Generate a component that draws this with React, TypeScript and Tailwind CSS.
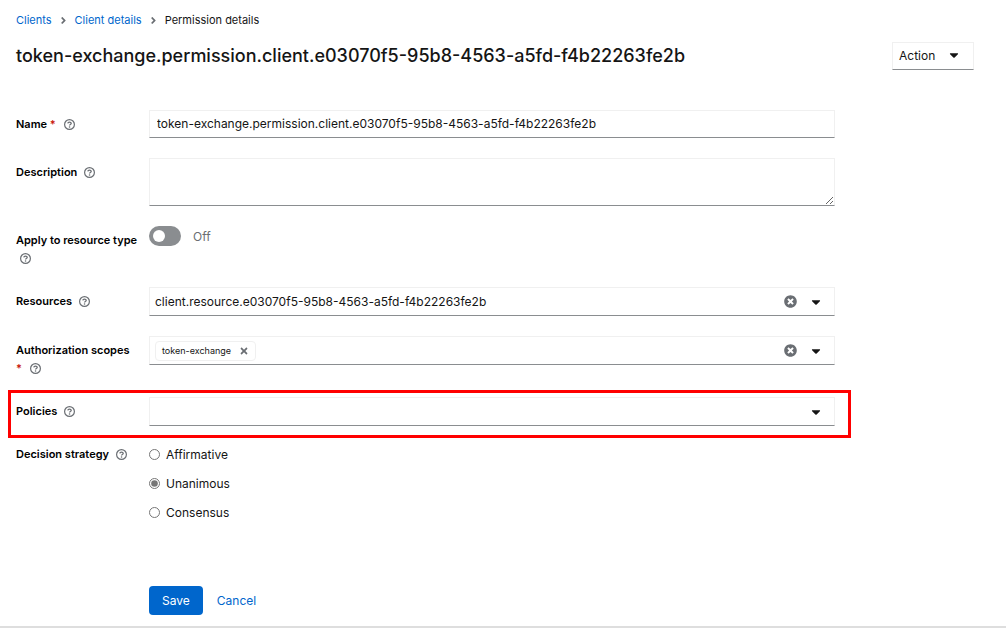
import { useState, type ReactNode } from "react";
import { FaAngleRight, FaCaretDown, FaTimes, FaTimesCircle } from "react-icons/fa";
import clsx from "clsx";

const PERMISSION_NAME =
  "token-exchange.permission.client.e03070f5-95b8-4563-a5fd-f4b22263fe2b";
const STRATEGIES = ["Affirmative", "Unanimous", "Consensus"];

const FIELD_BORDER = "border border-[#f0f0f0] border-b-[#8a8d90] bg-white";

function HelpButton({ label }: { label: string }) {
  return (
    <button
      type="button"
      aria-label={`Help for ${label}`}
      className="ml-1 inline-block align-[-2px] leading-none text-[#6a6e73]"
    >
      <svg viewBox="0 0 22 22" className="size-[11px]" fill="none" stroke="currentColor">
        <circle cx="11" cy="11" r="9.800" strokeWidth="2.400" />
        <path
          d="M7.600 8.800C7.800 7 9.200 6.200 11 6.200c2 0 3.400 1 3.400 2.600 0 2.200-3.300 2-3.300 4"
          strokeWidth="2.600"
        />
        <circle cx="11.100" cy="15.900" r="1.600" fill="currentColor" stroke="none" />
      </svg>
    </button>
  );
}

function Field({
  id,
  label,
  required,
  highlighted,
  flush,
  children,
}: {
  id: string;
  label: string;
  required?: boolean;
  highlighted?: boolean;
  flush?: boolean;
  children: ReactNode;
}) {
  return (
    <div
      className={clsx("relative grid grid-cols-[133px_minmax(0,1fr)]", flush && "-mt-px")}
    >
      <div
        className={clsx(
          "pr-2.5 text-[11px] leading-[18px] font-semibold text-black",
          !flush && "pt-[5px]"
        )}
      >
        <label htmlFor={id} id={`${id}-label`}>
          {label}
        </label>{" "}
        <span className="whitespace-nowrap">
          {required && <span className="mr-1 text-[#c9190b]">*</span>}
          <HelpButton label={label} />
        </span>
      </div>
      <div className="min-w-0">{children}</div>
      {highlighted && (
        <div className="pointer-events-none absolute -top-[7px] -right-4 -bottom-3 -left-2 border-3 border-[#ff0000]" />
      )}
    </div>
  );
}

function Typeahead({
  id,
  value,
  chip,
  clearable,
}: {
  id: string;
  value?: string;
  chip?: string;
  clearable?: boolean;
}) {
  const [text, setText] = useState(value ?? "");

  return (
    <div className={clsx("flex h-[29px] items-center pr-[11px] pl-[5px]", FIELD_BORDER)}>
      {chip && (
        <span className="mr-2 flex h-5 items-center gap-2 rounded-sm border border-[#f0f0f0] px-1.5 text-[9px]">
          {chip}
          <button type="button" aria-label={`Remove ${chip}`} className="text-[#6a6e73]">
            <FaTimes className="size-[10px]" />
          </button>
        </span>
      )}
      <input
        id={id}
        type="text"
        value={text}
        onChange={(e) => setText(e.target.value)}
        className="min-w-0 flex-1 outline-none"
      />
      {clearable && (
        <button
          type="button"
          aria-label="Clear"
          className="mr-3 text-[#6a6e73]"
          onClick={() => setText("")}
        >
          <FaTimesCircle className="size-[13px]" />
        </button>
      )}
      <button type="button" aria-label="Toggle options">
        <FaCaretDown className="size-3.5" />
      </button>
    </div>
  );
}

function Breadcrumb() {
  return (
    <nav aria-label="Breadcrumb">
      <ol className="flex items-center gap-1.5 text-[11px] leading-4">
        <li>
          <a href="#clients" className="text-[#0066cc]">
            Clients
          </a>
        </li>
        <FaAngleRight className="size-[11px] text-[#6a6e73]" />
        <li>
          <a href="#client" className="text-[#0066cc]">
            Client details
          </a>
        </li>
        <FaAngleRight className="size-[11px] text-[#6a6e73]" />
        <li aria-current="page">Permission details</li>
      </ol>
    </nav>
  );
}

export default function App() {
  const [applyToType, setApplyToType] = useState(false);
  const [strategy, setStrategy] = useState("Unanimous");

  return (
    <main className="border-b-2 border-[#dedede] bg-white pt-3 pr-8 pb-[11px] pl-4 font-[Inter,sans-serif] text-[12px] leading-[19px] text-[#151515]">
      <Breadcrumb />

      <header className="mt-3.5 flex items-start justify-between gap-4">
        <h1 className="text-[18px] leading-7 font-medium">{PERMISSION_NAME}</h1>
        <button
          type="button"
          className={clsx("flex h-7 w-[82px] items-center gap-3 px-1.5 pb-0.5", FIELD_BORDER)}
        >
          Action
          <FaCaretDown className="size-3.5" />
        </button>
      </header>

      <form
        className="mt-10 flex max-w-[819px] flex-col gap-5"
        onSubmit={(e) => e.preventDefault()}
      >
        <Field id="name" label="Name" required>
          <input
            id="name"
            type="text"
            defaultValue={PERMISSION_NAME}
            className={clsx("block h-7 w-full px-[7px] pb-0.5", FIELD_BORDER)}
          />
        </Field>

        <Field id="description" label="Description">
          <textarea id="description" className={clsx("block h-12 w-full resize-y px-[7px]", FIELD_BORDER)} />
        </Field>

        <Field id="apply" label="Apply to resource type">
          <label className="flex w-fit items-center gap-3 text-[#6a6e73]">
            <input
              id="apply"
              type="checkbox"
              role="switch"
              checked={applyToType}
              onChange={(e) => setApplyToType(e.target.checked)}
              className="h-5 w-8 appearance-none rounded-full bg-[#8a8d90] before:m-1 before:block before:size-3 before:rounded-full before:bg-white checked:bg-[#0066cc] checked:before:ml-4"
            />
            {applyToType ? "On" : "Off"}
          </label>
        </Field>

        <Field id="resources" label="Resources">
          <Typeahead id="resources" value="client.resource.e03070f5-95b8-4563-a5fd-f4b22263fe2b" clearable />
        </Field>

        <Field id="scopes" label="Authorization scopes" required>
          <Typeahead id="scopes" chip="token-exchange" clearable />
        </Field>

        <Field id="policies" label="Policies" highlighted>
          <Typeahead id="policies" />
        </Field>

        <Field id="strategy" label="Decision strategy" flush>
          <div role="radiogroup" aria-labelledby="strategy-label" className="flex flex-col gap-2.5">
            {STRATEGIES.map((option, i) => (
              <label key={option} className="flex w-fit items-center gap-1.5">
                <input
                  id={i === 0 ? "strategy" : undefined}
                  type="radio"
                  name="strategy"
                  checked={strategy === option}
                  onChange={() => setStrategy(option)}
                  className="size-[11px] accent-[#767676]"
                />
                {option}
              </label>
            ))}
          </div>
        </Field>

        <div className="mt-11 ml-[133px] flex gap-3.5">
          <button type="submit" className="h-[29px] rounded-sm bg-[#0066cc] px-[13px] text-white">
            Save
          </button>
          <button type="button" className="text-[#0066cc]">
            Cancel
          </button>
        </div>
      </form>
    </main>
  );
}
